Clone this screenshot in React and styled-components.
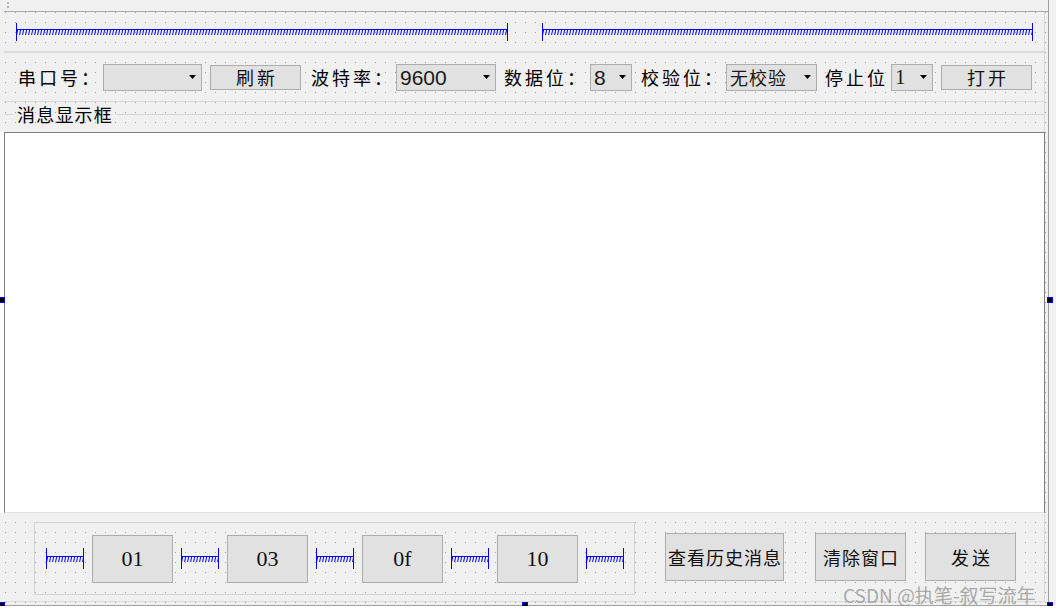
import React from 'react'
import styled, { createGlobalStyle } from 'styled-components'

const GlobalStyle = createGlobalStyle`
  *, *::before, *::after { box-sizing: border-box; }
  html, body { margin: 0; padding: 0; background: #fff; }
  body {
    font-family: "Noto Sans CJK SC", sans-serif;
    color: #000;
  }
`

const Page = styled.div`
  position: relative;
  display: flex;
  width: 1056px;
  height: 606px;
  background: #f0f0f0;
`

const Window = styled.div`
  display: flex;
  flex-direction: column;
  width: 1049px;
  border-right: 1px solid #a0a0a0;
`

const TopStrip = styled.div`
  height: 11px;
  flex-shrink: 0;
  display: flex;
  flex-direction: column;
  gap: 2px;
  padding: 2px 0 0 7px;
`

const GripDot = styled.span`
  width: 2px;
  height: 2px;
  background: #b4b4b4;
`

const Form = styled.div`
  flex: 1;
  margin-left: 4px;
  padding: 0 3px 3px 0;
  border-top: 1px solid #ababab;
  border-bottom: 1px solid #a0a0a0;
  display: flex;
  flex-direction: column;
  background-color: #f0f0f0;
  background-image:
    linear-gradient(90deg, transparent 1px, #f0f0f0 1px),
    linear-gradient(#a3a3a3 1px, transparent 1px);
  background-size: 10px 10px;
  background-position: 1px 0;
`

const LayoutRow = styled.div`
  flex-shrink: 0;
  display: flex;
  border-right: 1px solid #dadada;
`

const TopRow = styled(LayoutRow)`
  height: 40px;
  align-items: center;
  padding-left: 12px;
  border-bottom: 1px solid #dadada;
`

const ParamRow = styled(LayoutRow)`
  height: 50px;
  align-items: center;
  padding-left: 14px;
  border-top: 1px solid #dadada;
  border-bottom: 1px solid #dadada;
`

const TitleRow = styled(LayoutRow)`
  height: 30px;
  align-items: flex-start;
`

const TitleLine = styled.div`
  height: 1px;
  margin-top: 12px;
  background: #d6d6d6;
  width: ${p => (p.$grow ? 'auto' : '9px')};
  flex: ${p => (p.$grow ? 1 : 'none')};
`

const TitleText = styled.span`
  padding: 0 2px 0 4px;
  font-size: 18px;
  line-height: 24px;
  letter-spacing: 1.2px;
`

const TextEdit = styled.div`
  flex-shrink: 0;
  height: 381px;
  background: #fff;
  border: 1px solid #7f7f7f;
  border-bottom-color: #e0e0e0;
  box-shadow: -4px 0 0 #fff;
`

const BottomRow = styled(LayoutRow)`
  height: 89px;
  align-items: flex-start;
  padding-left: 30px;
  border-bottom: 1px solid #dadada;
`

const HexFrame = styled.div`
  margin-top: 9px;
  width: 601px;
  height: 73px;
  border: 1px solid #d4d4d4;
  display: flex;
  align-items: center;
  gap: 8px;
  padding-left: 11px;
`

const Label = styled.span`
  flex-shrink: 0;
  width: ${p => p.$w}px;
  margin-left: ${p => p.$ml || 0}px;
  font-size: 18px;
  line-height: 1;
  letter-spacing: 3px;
  white-space: nowrap;
`

const Combo = styled.div`
  flex-shrink: 0;
  width: ${p => p.$w}px;
  height: 27px;
  background: #e1e1e1;
  border: 1px solid #adadad;
  display: flex;
  align-items: center;
  justify-content: space-between;
  padding: 0 5px 0 3px;
`

const fonts = {
  sans: '"Liberation Sans", Arial, sans-serif',
  serif: '"Liberation Serif", "Times New Roman", serif',
  cjk: '"Noto Sans CJK SC", sans-serif',
}

const ComboText = styled.span`
  font-family: ${p => fonts[p.$font]};
  font-size: ${p => (p.$font === 'cjk' ? 18 : 21)}px;
  letter-spacing: ${p => (p.$font === 'cjk' ? '1px' : '0')};
  line-height: 1;
  color: #1a1a1a;
  white-space: nowrap;
`

const PushButton = styled.div`
  flex-shrink: 0;
  width: ${p => p.$w}px;
  height: ${p => p.$h || 25}px;
  margin-left: ${p => p.$ml || 0}px;
  margin-top: ${p => p.$mt || 0}px;
  background: #e1e1e1;
  border: 1px solid #adadad;
  display: flex;
  align-items: center;
  justify-content: center;
  font-family: ${p => fonts[p.$font || 'cjk']};
  font-size: ${p => (p.$font === 'serif' ? 22 : 18)}px;
  letter-spacing: ${p => p.$ls || 0}px;
  text-indent: ${p => p.$ls || 0}px;
  line-height: 1;
  white-space: nowrap;
  color: #111;
`

const Watermark = styled.div`
  position: absolute;
  left: 843px;
  top: 584px;
  font-family: "Noto Sans CJK SC", sans-serif;
  font-size: 19px;
  line-height: 22px;
  color: rgba(150, 150, 150, 0.8);
  white-space: nowrap;
`

const Handle = styled.div`
  position: absolute;
  left: ${p => p.$x}px;
  top: ${p => p.$y}px;
  width: 6px;
  height: 6px;
  background: #000;
  border: 1px solid #0000ff;
`

function Arrow() {
  return (
    <svg width="7" height="4" viewBox="0 0 7 4">
      <polygon points="0,0 7,0 3.5,4" fill="#000" />
    </svg>
  )
}

function Spring({ id, w, h }) {
  const band = Math.round((h - 6) / 2)
  return (
    <svg width={w} height={h} style={{ flexShrink: 0, display: 'block' }}>
      <defs>
        <pattern id={id} x="0" y={band} width="3" height="6" patternUnits="userSpaceOnUse">
          <rect x="0" y="0" width="3" height="1" fill="#0000ff" />
          <path d="M0.6 6 L1.6 1" stroke="#0000ff" strokeWidth="1" />
        </pattern>
      </defs>
      <rect x="0" y="0" width="1" height={h} fill="#0000ff" />
      <rect x={w - 1} y="0" width="1" height={h} fill="#0000ff" />
      <rect x="1" y={band} width={w - 2} height="6" fill={`url(#${id})`} />
    </svg>
  )
}

const TopSpacerGap = styled.div`
  width: 34px;
  flex-shrink: 0;
`

const hexValues = ['01', '03', '0f', '10']

export default function App() {
  return (
    <>
      <GlobalStyle />
      <Page>
        <Window>
          <TopStrip>
            <GripDot />
            <GripDot />
          </TopStrip>
          <Form>
            <TopRow>
              <Spring id="sp-top-1" w={492} h={18} />
              <TopSpacerGap />
              <Spring id="sp-top-2" w={491} h={18} />
            </TopRow>

            <ParamRow>
              <Label $w={85}>串口号：</Label>
              <Combo $w={99}>
                <ComboText $font="cjk"></ComboText>
                <Arrow />
              </Combo>
              <PushButton $w={91} $ml={8} $ls={3}>刷新</PushButton>
              <Label $w={85} $ml={10}>波特率：</Label>
              <Combo $w={100}>
                <ComboText $font="sans">9600</ComboText>
                <Arrow />
              </Combo>
              <Label $w={86} $ml={8}>数据位：</Label>
              <Combo $w={42}>
                <ComboText $font="sans">8</ComboText>
                <Arrow />
              </Combo>
              <Label $w={85} $ml={9}>校验位：</Label>
              <Combo $w={91}>
                <ComboText $font="cjk">无校验</ComboText>
                <Arrow />
              </Combo>
              <Label $w={66} $ml={8}>停止位</Label>
              <Combo $w={42}>
                <ComboText $font="serif">1</ComboText>
                <Arrow />
              </Combo>
              <PushButton $w={91} $ml={8} $ls={3}>打开</PushButton>
            </ParamRow>

            <TitleRow>
              <TitleLine />
              <TitleText>消息显示框</TitleText>
              <TitleLine $grow />
            </TitleRow>

            <TextEdit />

            <BottomRow>
              <HexFrame>
                <Spring id="sp-hex-0" w={38} h={21} />
                {hexValues.map((v, i) => (
                  <React.Fragment key={v}>
                    <PushButton $w={81} $h={48} $font="serif">{v}</PushButton>
                    <Spring id={`sp-hex-${i + 1}`} w={38} h={21} />
                  </React.Fragment>
                ))}
              </HexFrame>
              <PushButton $w={119} $h={48} $ml={30} $mt={20} $ls={1}>查看历史消息</PushButton>
              <PushButton $w={91} $h={48} $ml={31} $mt={20} $ls={1}>清除窗口</PushButton>
              <PushButton $w={91} $h={48} $ml={19} $mt={20} $ls={3}>发送</PushButton>
            </BottomRow>
          </Form>
        </Window>

        <Handle $x={-1} $y={297} />
        <Handle $x={1047} $y={297} />
        <Handle $x={-1} $y={602} />
        <Handle $x={522} $y={602} />
        <Handle $x={1047} $y={602} />
        <Watermark>CSDN @执笔-叙写流年</Watermark>
      </Page>
    </>
  )
}
